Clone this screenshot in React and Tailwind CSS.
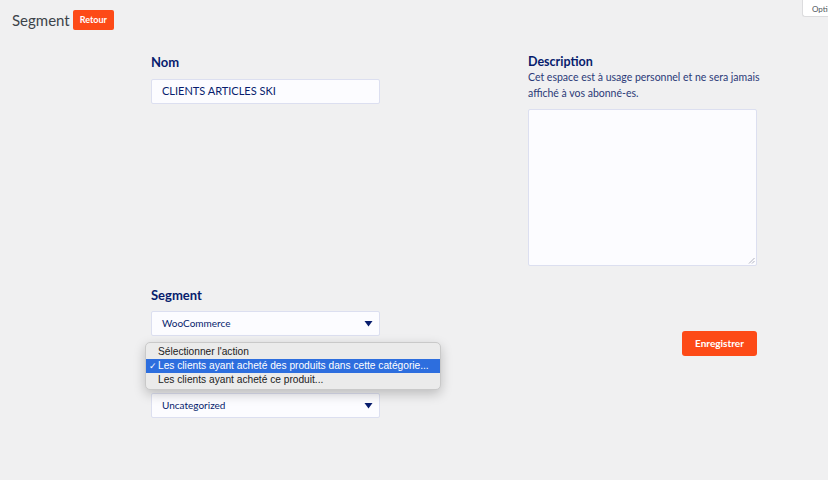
import React from 'react';

const font = { fontFamily: 'Lato, "Noto Sans", sans-serif' };

function Caret() {
    return (
        <svg width="9" height="7" viewBox="0 0 9 7" className="shrink-0">
            <path d="M0.5 1h8L4.5 6.5z" fill="#071c6d" />
        </svg>
    );
}

function Select({ value }) {
    return (
        <div className="flex h-[25px] w-[229px] items-center justify-between rounded-[2px] border border-[#dcdff0] bg-[#fcfcff] pl-[10px] pr-[6px]">
            <span className="text-[10px] text-[#071c6d]">{value}</span>
            <Caret />
        </div>
    );
}

export default function App() {
    return (
        <div className="relative min-h-[480px] w-full bg-[#f0f0f1]" style={font}>
            <div className="flex items-center gap-[3px] pl-[12px] pt-[10px]">
                <h1 className="text-[15px] leading-[20px] text-[#3c434a]">Segment</h1>
                <button className="h-[20px] rounded-[2px] bg-[#fd4a17] px-[7px] text-[9px] font-bold text-white">
                    Retour
                </button>
            </div>

            <div className="absolute right-0 top-0 h-[17px] w-[26px] overflow-hidden whitespace-nowrap rounded-bl-[3px] border-b border-l border-[#dcdcde] bg-white pl-[9px] pt-[3px] text-[8px] text-[#50575e]">
                Options
            </div>

            <div className="ml-[151px] mt-[23px] grid w-[606px] grid-cols-[229px_229px] justify-between">
                <div>
                    <label className="block text-[13px] font-bold leading-[18px] text-[#071c6d]">Nom</label>
                    <div className="mt-[8px] flex h-[25px] items-center rounded-[2px] border border-[#dcdff0] bg-[#fcfcff] px-[10px]">
                        <span className="text-[11px] text-[#071c6d]">CLIENTS ARTICLES SKI</span>
                    </div>
                </div>
                <div>
                    <label className="block text-[12.5px] font-bold leading-[18px] text-[#071c6d]">Description</label>
                    <p className="-mt-[2px] w-[236px] text-[10.5px] leading-[16px] text-[#2b3a78]">
                        Cet espace est à usage personnel et ne sera jamais affiché à vos abonné-es.
                    </p>
                    <div className="relative mt-[8px] h-[157px] rounded-[2px] border border-[#dcdff0] bg-[#fcfcff]">
                        <svg width="7" height="7" viewBox="0 0 7 7" className="absolute bottom-[1px] right-[1px]">
                            <path d="M6.5 1L1 6.5M6.5 4L4 6.5" stroke="#9ca0ad" strokeWidth="0.8" />
                        </svg>
                    </div>
                </div>

                <div className="mt-[20px]">
                    <label className="block text-[13px] font-bold leading-[18px] text-[#071c6d]">Segment</label>
                    <div className="mt-[7px] flex flex-col gap-[16px]">
                        <Select value="WooCommerce" />
                        <Select value="Sélectionner l'action" />
                        <Select value="Uncategorized" />
                    </div>
                </div>
                <div className="mt-[65px] flex justify-end">
                    <button className="h-[25px] w-[75px] rounded-[3px] bg-[#fd4a17] text-[10px] font-bold text-white">
                        Enregistrer
                    </button>
                </div>
            </div>

            <div
                className="absolute left-[145px] top-[342px] w-[296px] whitespace-nowrap rounded-[5px] border border-[#c9c9c9] bg-[#ebebeb] py-[2px] text-[10.2px] leading-[14px] text-[#222] shadow-[0_4px_12px_rgba(0,0,0,0.22)]"
                style={{ fontFamily: '"Liberation Sans", Arial, sans-serif' }}
            >
                <div className="h-[14px] pl-[12px]">Sélectionner l'action</div>
                <div className="flex h-[14px] items-center bg-[#2d6ede] text-white">
                    <span className="w-[12px] pl-[3px] text-[9px]">✓</span>
                    <span>Les clients ayant acheté des produits dans cette catégorie...</span>
                </div>
                <div className="h-[14px] pl-[12px]">Les clients ayant acheté ce produit...</div>
            </div>
        </div>
    );
}
